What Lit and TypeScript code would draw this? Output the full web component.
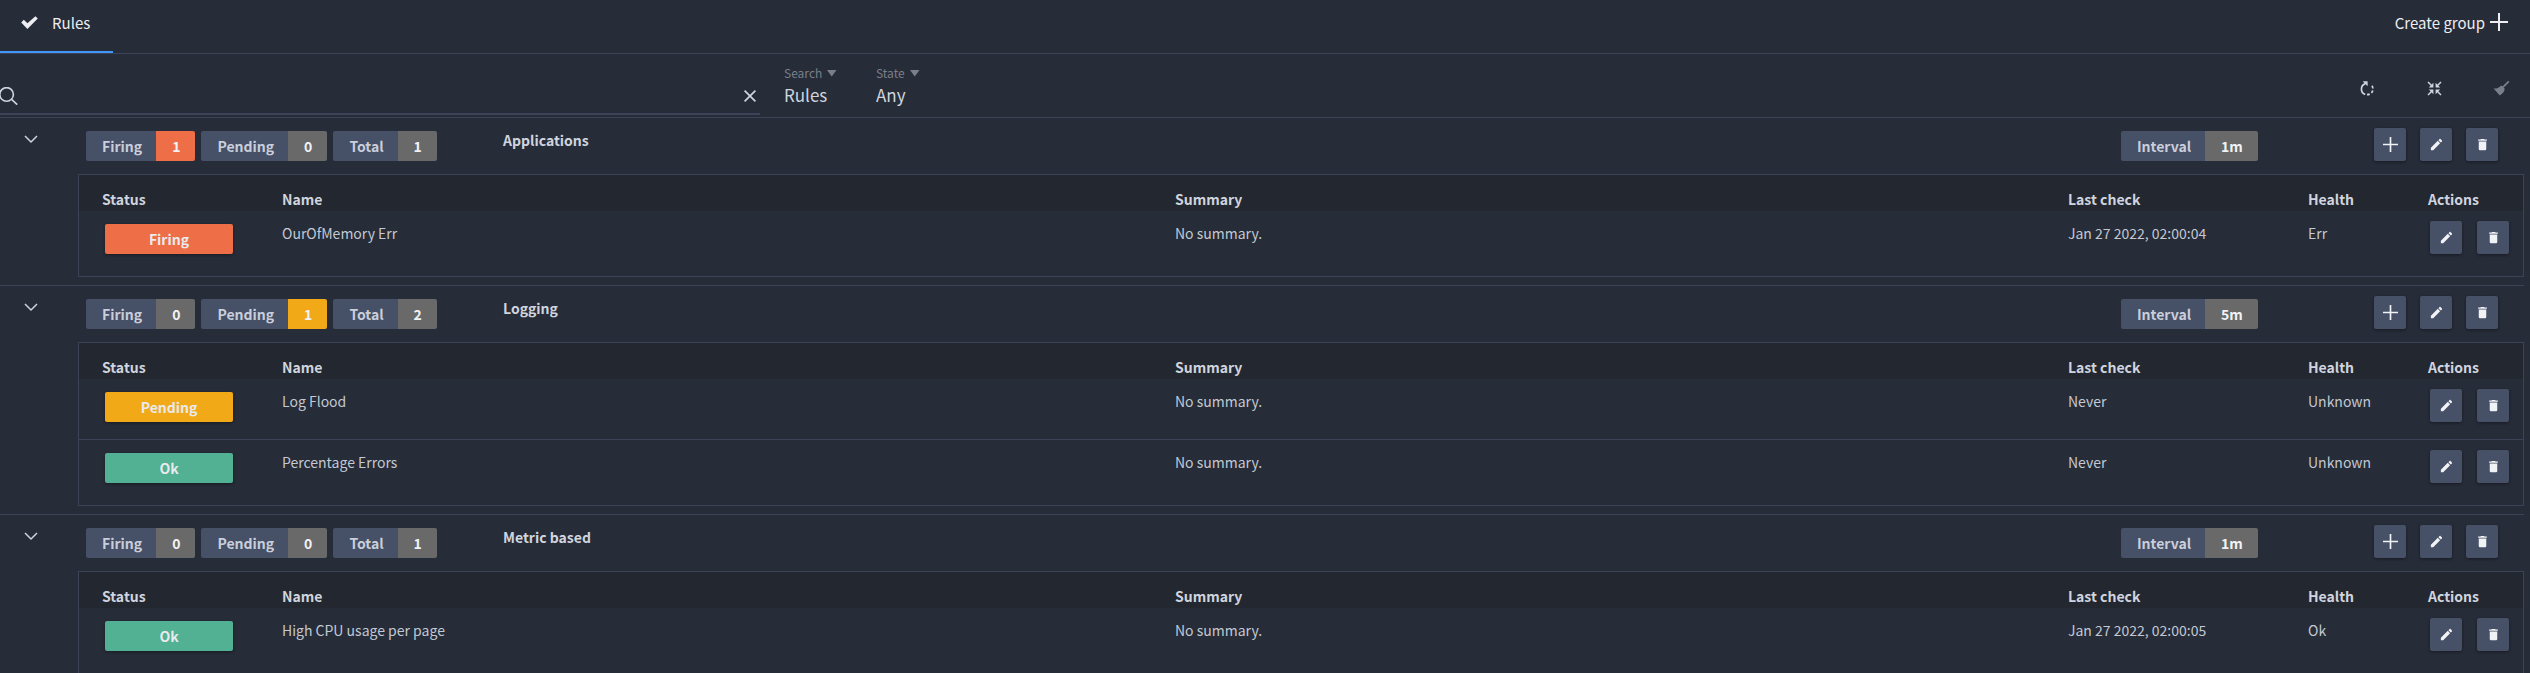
import { LitElement, html, css, svg } from "lit";
import { customElement, property } from "lit/decorators.js";
import { classMap } from "lit/directives/class-map.js";

type State = "firing" | "pending" | "ok";
interface Rule {
  status: State;
  name: string;
  checked: string;
  health: string;
}
interface Group {
  name: string;
  interval: string;
  rules: Rule[];
}

const GROUPS: Group[] = [
  {
    name: "Applications",
    interval: "1m",
    rules: [{ status: "firing", name: "OurOfMemory Err", checked: "Jan 27 2022, 02:00:04", health: "Err" }],
  },
  {
    name: "Logging",
    interval: "5m",
    rules: [
      { status: "pending", name: "Log Flood", checked: "Never", health: "Unknown" },
      { status: "ok", name: "Percentage Errors", checked: "Never", health: "Unknown" },
    ],
  },
  {
    name: "Metric based",
    interval: "1m",
    rules: [{ status: "ok", name: "High CPU usage per page", checked: "Jan 27 2022, 02:00:05", health: "Ok" }],
  },
];

const STATUS_LABEL: Record<State, string> = { firing: "Firing", pending: "Pending", ok: "Ok" };

const SHAPES = {
  check: svg`<path fill="currentColor" d="M.2 9.400 2.800 6.800l3.600 3.400L14.400 3.200l2.400 2.400L6.400 16z"/>`,
  plus: svg`<path fill="none" stroke="currentColor" stroke-width="2" d="M9 0v18M0 9h18"/>`,
  search: svg`<g fill="none" stroke="currentColor" stroke-width="1.600"><circle cx="6.600" cy="7.400" r="6.800"/><path d="m11.600 12.400 5.600 5.300"/></g>`,
  close: svg`<path fill="none" stroke="currentColor" stroke-width="1.700" d="m3.600 3.600 10.800 10.800M14.400 3.600 3.600 14.400"/>`,
  chevron: svg`<path fill="none" stroke="currentColor" stroke-width="1.500" d="m3 6 6 6 6-6"/>`,
  caret: svg`<path fill="currentColor" d="M5 6h9.500L9.750 12.400z"/>`,
  pencil: svg`<path fill="currentColor" transform="scale(.75)" d="M20.71 7.04c.39-.39.39-1.04 0-1.41l-2.34-2.34c-.37-.39-1.02-.39-1.41 0l-1.84 1.83 3.75 3.75M3 17.25V21h3.75L17.81 9.93l-3.75-3.75L3 17.25z"/>`,
  trash: svg`<path fill="currentColor" transform="scale(.75)" d="M19 4h-3.5l-1-1h-5l-1 1H5v2h14M6 19a2 2 0 0 0 2 2h8a2 2 0 0 0 2-2V7H6v12z"/>`,
  reload: svg`<path fill="none" stroke="currentColor" stroke-width="1.700" d="M7.400 4.600A5.700 5.700 0 0 0 7.200 15.400"/><path fill="none" stroke="currentColor" stroke-width="1.700" stroke-dasharray="2.800 2" d="M9 15.700A5.700 5.700 0 0 0 12.600 5.400"/><path fill="currentColor" d="M4.600 2.300h5v5z"/>`,
  collapse: svg`<path fill="none" stroke="currentColor" stroke-width="1.500" d="m3 3 4 4M16 3l-4 4M3 16l4-4M16 16l-4-4"/><path fill="currentColor" d="M8.400 3.800v4.600H3.800zM10.600 3.800v4.600h4.600zM8.400 15.200v-4.600H3.800zM10.600 15.200v-4.600h4.600z"/>`,
  broom: svg`<path fill="none" stroke="currentColor" stroke-width="1.800" d="M16.800 2.300 10.800 8.300"/><path fill="currentColor" d="M9.400 6.400 12.600 9.400c.2 2.600-1.600 4.800-4.800 7L1.600 9.600c3 .2 5.400-1 7.800-3.200z"/>`,
};
type IconName = keyof typeof SHAPES;

@customElement("ui-icon")
class UiIcon extends LitElement {
  @property() name: IconName = "plus";
  static styles = css`
    :host { display: block; flex: none; width: 18px; height: 18px; }
    svg { display: block; width: 100%; height: 100%; }
  `;
  render() {
    return html`<svg viewBox="0 0 18 18" aria-hidden="true">${SHAPES[this.name]}</svg>`;
  }
}

@customElement("count-chip")
class CountChip extends LitElement {
  @property() label = "";
  @property() value = "";
  @property() tone = "";
  static styles = css`
    :host { display: flex; height: 30px; border-radius: 2px; overflow: hidden; font-weight: 700; line-height: 31px; }
    .label { padding: 0 14px 0 16px; background: #465066; color: #c9cedb; }
    .value { padding: 0 15px 0 16px; background: #696969; color: #f0f2f5; }
    .firing { background: #ee6e48; }
    .pending { background: #f2a918; }
  `;
  render() {
    return html`<span class="label">${this.label}</span
      ><span class=${classMap({ value: true, firing: this.tone === "firing", pending: this.tone === "pending" })}
        >${this.value}</span>`;
  }
}

@customElement("rule-group")
class RuleGroup extends LitElement {
  @property({ attribute: false }) group!: Group;
  static styles = css`
    * { box-sizing: border-box; }
    :host { display: block; padding-bottom: 8px; border-bottom: 1px solid #3c4357; }
    button { font: inherit; border: 0; padding: 0; color: inherit; cursor: pointer; }
    .head { display: flex; align-items: flex-start; height: 56px; padding: 10px 26px 0 0; }
    .toggle { width: 86px; padding: 2px 0 0 22px; background: none; }
    .chips { display: flex; gap: 6px; width: 417px; padding-top: 3px; }
    .title { flex: 1; margin: 0; font-size: 14px; line-height: 24px; font-weight: 700; }
    .interval { display: flex; width: 253px; padding-top: 3px; }
    .tools { display: flex; gap: 14px; }
    .tool { display: grid; place-items: center; width: 32px; height: 33px; border-radius: 2px;
      background: #465066; color: #f0f2f5; box-shadow: 0 1px 3px rgba(0, 0, 0, 0.4); }
    .tool ui-icon { width: 15px; height: 15px; }
    .box { margin-left: 78px; padding-bottom: 5px; border: 1px solid #3c4357; }
    table { width: 100%; border-collapse: separate; border-spacing: 0; table-layout: fixed; }
    th, td { padding: 0; text-align: left; vertical-align: top; }
    thead { background: #232730; }
    th { height: 36px; padding-top: 12px; line-height: 24px; font-weight: 700; }
    td { height: 60px; padding-top: 10px; line-height: 24px; color: #c3c8d2; }
    tr + tr td { height: 61px; border-top: 1px solid #3c4357; }
    th:first-child { padding-left: 23px; }
    td:first-child { padding: 13px 0 0 26px; }
    .c-status { width: 203px; }
    .c-check { width: 240px; }
    .c-health { width: 120px; }
    .c-actions { width: 95px; }
    .status { display: block; width: 128px; height: 30px; border-radius: 2px; line-height: 31px; text-align: center;
      font-weight: 700; color: #e9eaec; box-shadow: 0 1px 3px rgba(0, 0, 0, 0.4); }
    .firing { background: #ee6e48; }
    .pending { background: #f2a918; }
    .ok { background: #52b192; }
    .actions { display: flex; gap: 15px; padding-left: 2px; }
  `;
  private count(s: State) {
    return this.group.rules.filter((r) => r.status === s).length;
  }
  private tool(icon: IconName, label: string) {
    return html`<button class="tool" type="button" aria-label=${label}><ui-icon name=${icon}></ui-icon></button>`;
  }
  render() {
    const g = this.group;
    const firing = this.count("firing");
    const pending = this.count("pending");
    return html`
      <div class="head">
        <button class="toggle" type="button" aria-label="Toggle ${g.name}" aria-expanded="true"><ui-icon name="chevron"></ui-icon></button>
        <div class="chips">
          <count-chip label="Firing" value=${firing} tone=${firing ? "firing" : ""}></count-chip>
          <count-chip label="Pending" value=${pending} tone=${pending ? "pending" : ""}></count-chip>
          <count-chip label="Total" value=${g.rules.length}></count-chip>
        </div>
        <h2 class="title">${g.name}</h2>
        <div class="interval"><count-chip label="Interval" value=${g.interval}></count-chip></div>
        <div class="tools">
          ${this.tool("plus", "Add rule")}${this.tool("pencil", "Edit group")}${this.tool("trash", "Delete group")}
        </div>
      </div>
      <div class="box">
        <table>
          <colgroup>
            <col class="c-status" /><col /><col /><col class="c-check" /><col class="c-health" /><col class="c-actions" />
          </colgroup>
          <thead>
            <tr><th>Status</th><th>Name</th><th>Summary</th><th>Last check</th><th>Health</th><th>Actions</th></tr>
          </thead>
          <tbody>
            ${g.rules.map(
              (r) => html`<tr>
                <td><span class="status ${r.status}">${STATUS_LABEL[r.status]}</span></td>
                <td>${r.name}</td>
                <td>No summary.</td>
                <td>${r.checked}</td>
                <td>${r.health}</td>
                <td><div class="actions">${this.tool("pencil", "Edit rule")}${this.tool("trash", "Delete rule")}</div></td>
              </tr>`
            )}
          </tbody>
        </table>
      </div>
    `;
  }
}

@customElement("app-root")
class AppRoot extends LitElement {
  static styles = css`
    * { box-sizing: border-box; }
    :host { display: block; height: 100vh; overflow: hidden; background: #262c38; color: #d0d4de;
      font: 14px/24px "Noto Sans CJK SC", "Noto Sans", sans-serif; }
    button, input, select { font: inherit; color: inherit; background: none; border: 0; padding: 0; outline: 0; }
    button { cursor: pointer; }
    .top { display: flex; justify-content: space-between; height: 54px; padding-right: 22px;
      border-bottom: 1px solid #3c4357; color: #eceef1; font-size: 15px; }
    .tab { display: flex; gap: 13px; width: 113px; padding: 11px 0 0 21px; border-bottom: 2px solid #4196f7; }
    .tab ui-icon, .create ui-icon { margin-top: 2px; }
    .create { display: flex; gap: 5px; padding-top: 11px; }
    .bar { display: flex; align-items: flex-start; height: 64px; border-bottom: 1px solid #3c4357; }
    .search { display: flex; align-items: center; width: 760px; height: 61px; padding: 25px 1px 0 0;
      border-bottom: 2px solid #3c4357; }
    .search input { flex: 1; min-width: 0; height: 30px; padding-left: 8px; }
    .field { display: flex; flex-direction: column; width: 92px; padding-top: 9px; }
    .fields { display: flex; flex: 1; padding-left: 24px; }
    .field label { display: flex; align-items: center; color: #7b7f8a; font-size: 12px; line-height: 20px; }
    .field select { appearance: none; width: 80px; height: 24px; font-size: 17px; line-height: 24px; }
    .icons { display: flex; gap: 49px; padding: 25px 20px 0 0; }
    .icons button:last-child { color: #7b7f8a; }
    .list { padding-right: 6px; }
  `;
  private select(id: string, label: string, value: string, options: string[]) {
    return html`<div class="field">
      <label for=${id}>${label}<ui-icon name="caret"></ui-icon></label>
      <select id=${id}>
        ${options.map((o) => html`<option ?selected=${o === value}>${o}</option>`)}
      </select>
    </div>`;
  }
  render() {
    return html`
      <header class="top">
        <button class="tab" type="button"><ui-icon name="check"></ui-icon>Rules</button>
        <button class="create" type="button">Create group<ui-icon name="plus"></ui-icon></button>
      </header>
      <div class="bar">
        <div class="search">
          <ui-icon name="search"></ui-icon>
          <input type="text" aria-label="Search text" />
          <button type="button" aria-label="Clear"><ui-icon name="close"></ui-icon></button>
        </div>
        <div class="fields">
          ${this.select("scope", "Search", "Rules", ["Rules", "Groups"])}
          ${this.select("state", "State", "Any", ["Any", "Firing", "Pending", "Ok"])}
        </div>
        <div class="icons">
          <button type="button" aria-label="Refresh"><ui-icon name="reload"></ui-icon></button>
          <button type="button" aria-label="Collapse all"><ui-icon name="collapse"></ui-icon></button>
          <button type="button" aria-label="Clear filters"><ui-icon name="broom"></ui-icon></button>
        </div>
      </div>
      <main class="list">${GROUPS.map((g) => html`<rule-group .group=${g}></rule-group>`)}</main>
    `;
  }
}
